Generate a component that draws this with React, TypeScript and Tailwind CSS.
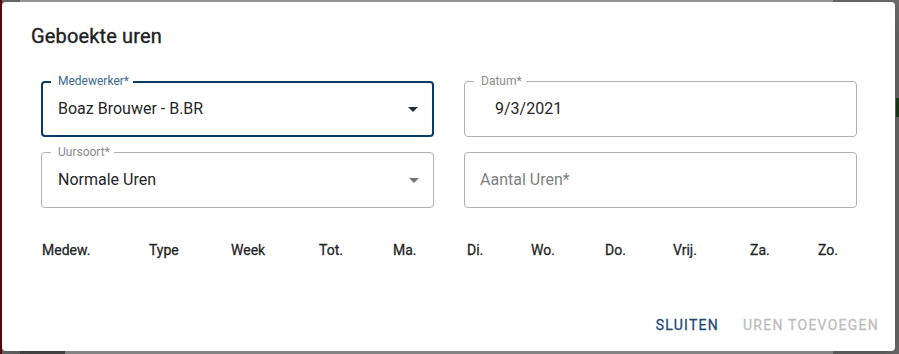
import React from "react";

const font = { fontFamily: "Roboto, 'Noto Sans', Arial, sans-serif" };

function Arrow({ color }: { color: string }) {
  return (
    <svg width="24" height="24" viewBox="0 0 24 24" className="absolute right-[7px] top-1/2 -translate-y-1/2">
      <path d="M7 10l5 5 5-5z" fill={color} />
    </svg>
  );
}

export default function App() {
  const cols = ["Medew.", "Type", "Week", "Tot.", "Ma.", "Di.", "Wo.", "Do.", "Vrij.", "Za.", "Zo."];
  return (
    <div className="relative w-[899px] h-[354px] bg-[#6b6b6b] pt-[2px] pl-[2px] overflow-hidden" style={font}>
      {/* backdrop remnants */}
      <div className="absolute left-0 top-0 w-[2px] h-full bg-[#5a0b0e]" />
      <div className="absolute left-[20px] top-0 w-[813px] h-[2px] bg-[#9f9f9f]" />
      <div className="absolute left-[20px] bottom-0 w-[45px] h-[3px] bg-[#4f4f4f]" />
      <div className="absolute left-[65px] bottom-0 w-[768px] h-[3px] bg-[#9f9f9f]" />
      <div className="absolute right-0 top-[98px] w-[3px] h-[19px] bg-[#1c3a1c]" />

      <div className="relative w-[893px] h-[349px] bg-white rounded-[4px] flex flex-col shadow-[0_8px_24px_rgba(0,0,0,0.25)]">
        <div className="pt-[18px] pl-[29px] text-[20px] leading-[32px] font-normal tracking-[0.15px] [-webkit-text-stroke:0.35px_#212121] text-[#212121]">
          Geboekte uren
        </div>

        <div className="mt-[29px] ml-[39px] grid grid-cols-[393px_393px] gap-x-[30px] gap-y-[15px]">
          {/* Medewerker - focused */}
          <div className="relative h-[56px] rounded-[4px] border-2 border-[#0b3a66] flex items-center pl-[15px]">
            <span className="absolute left-[8px] top-[-8px] bg-white pl-[7px] pr-[4px] text-[12px] leading-[12px] text-[#3a6894]">
              Medewerker*
            </span>
            <span className="text-[16px] text-[#262626] -mt-[1px]">Boaz Brouwer - B.BR</span>
            <Arrow color="#1f2f3f" />
          </div>

          {/* Datum */}
          <div className="relative h-[56px] rounded-[4px] border border-[#b0b0b0] flex items-center pl-[30px]">
            <span className="absolute left-[9px] top-[-7px] bg-white pl-[7px] pr-[4px] text-[12px] leading-[12px] text-[#8a8a8a]">
              Datum*
            </span>
            <span className="text-[16px] text-[#262626] -mt-[1px]">9/3/2021</span>
          </div>

          {/* Uursoort */}
          <div className="relative h-[56px] rounded-[4px] border border-[#b0b0b0] flex items-center pl-[16px]">
            <span className="absolute left-[9px] top-[-7px] bg-white pl-[7px] pr-[4px] text-[12px] leading-[12px] text-[#8a8a8a]">
              Uursoort*
            </span>
            <span className="text-[16px] text-[#262626] -mt-[1px]">Normale Uren</span>
            <Arrow color="#757575" />
          </div>

          {/* Aantal Uren */}
          <div className="relative h-[56px] rounded-[4px] border border-[#b0b0b0] flex items-center pl-[15px]">
            <span className="text-[16px] text-[#808080] -mt-[1px]">Aantal Uren*</span>
          </div>
        </div>

        <div className="mt-[30px] ml-[40px] grid grid-cols-[107px_82px_88px_74px_74px_64px_74px_68px_77px_68px_40px] text-[14px] leading-[24px] font-normal [-webkit-text-stroke:0.3px_#262626] text-[#262626]">
          {cols.map((c) => (
            <div key={c}>{c}</div>
          ))}
        </div>

        <div className="mt-auto flex justify-end gap-[8px] p-[8px]">
          <button className="h-[36px] px-[8px] text-[14px] font-normal tracking-[1.25px] uppercase text-[#1b4a78] [-webkit-text-stroke:0.3px_#1b4a78]">
            Sluiten
          </button>
          <button className="h-[36px] px-[8px] text-[14px] font-normal tracking-[1.25px] uppercase text-[#bdbdbd] [-webkit-text-stroke:0.3px_#bdbdbd]">
            Uren toevoegen
          </button>
        </div>
      </div>
    </div>
  );
}
